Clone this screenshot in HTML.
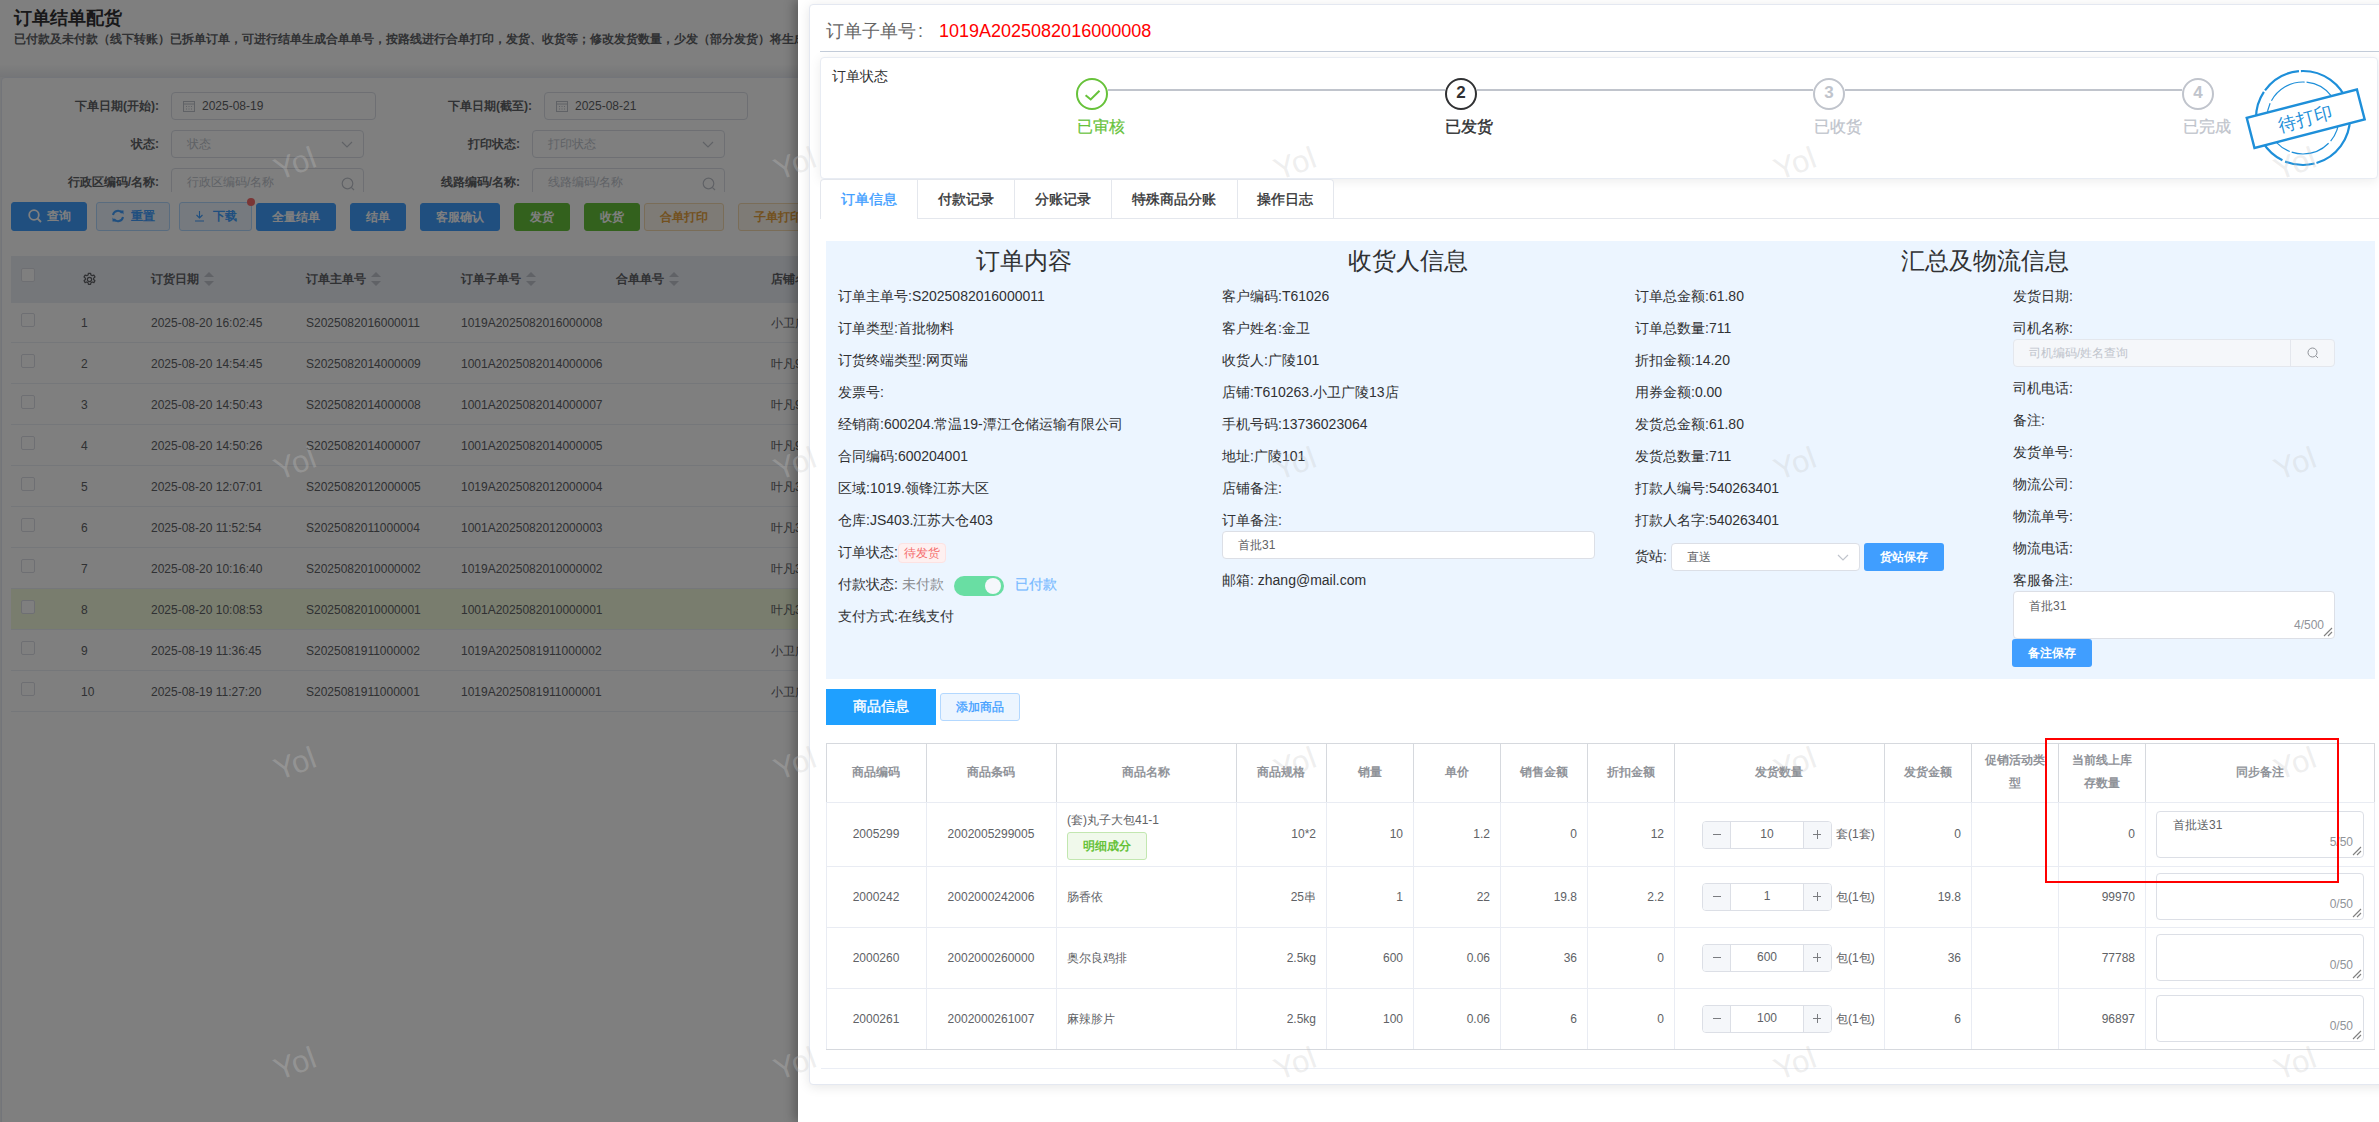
<!DOCTYPE html>
<html><head><meta charset="utf-8">
<style>
*{box-sizing:border-box;margin:0;padding:0}
html,body{width:2379px;height:1122px;overflow:hidden}
body{position:relative;font-family:"Liberation Sans",sans-serif;color:#333;background:#fff;font-size:14px}
.a{position:absolute;white-space:nowrap}
#left{position:absolute;left:0;top:0;width:798px;height:1122px;background:#f0f2f5;overflow:hidden}
#mask{position:absolute;left:0;top:0;width:798px;height:1122px;background:rgba(0,0,0,.5)}
#drawer{position:absolute;left:798px;top:0;width:1581px;height:1122px;background:#fff;box-shadow:-6px 0 12px rgba(0,0,0,.25)}
.lbl{font-size:12px;font-weight:bold;color:#606266;text-align:right}
.inp{position:absolute;height:28px;border:1px solid #dcdfe6;border-radius:4px;background:#fff;font-size:12px}
.btn{position:absolute;height:28px;border-radius:3px;font-size:12px;font-weight:bold;text-align:center;line-height:28px;color:#fff}
.bp{background:#409eff;border:1px solid #409eff}
.bl{background:#ecf5ff;border:1px solid #b3d8ff;color:#409eff}
.bg{background:#67c23a;border:1px solid #67c23a}
.bo{background:#fdf6ec;border:1px solid #f5dab1;color:#e6a23c}
.lt .th{position:absolute;top:0;height:47px;line-height:47px;font-size:12px;font-weight:bold;color:#606266}
.lrow{position:absolute;left:11px;width:900px;height:41px;border-bottom:1px solid #ebeef5;font-size:12px;color:#606266}
.lrow span{position:absolute;top:1px;line-height:41px}
.cb{position:absolute;width:14px;height:14px;border:1px solid #dcdfe6;border-radius:2px;background:#fff}
.caret{display:inline-block;position:relative;width:10px;height:14px;vertical-align:middle;margin-left:5px;top:-1px}
.caret:before{content:"";position:absolute;left:0;top:0;border:5px solid transparent;border-bottom-color:#c0c4cc;border-top:0}
.caret:after{content:"";position:absolute;left:0;bottom:0;border:5px solid transparent;border-top-color:#c0c4cc;border-bottom:0}
</style></head><body>
<div id="left">
  <div class="a" style="left:0;top:0;width:798px;height:65px;background:#fff"></div><div class="a" style="left:0;top:65px;width:798px;height:12px;background:linear-gradient(#fdfdfd,#eaecf0)"></div>
  <div class="a" style="left:14px;top:6px;font-size:18px;font-weight:bold;color:#303133;line-height:24px">订单结单配货</div>
  <div class="a" style="left:14px;top:31px;font-size:12px;font-weight:bold;color:#606266;line-height:16px">已付款及未付款（线下转账）已拆单订单，可进行结单生成合单单号，按路线进行合单打印，发货、收货等；修改发货数量，少发（部分发货）将生成新的子单</div>
  <div class="a" style="left:1px;top:77px;width:900px;height:1100px;background:#fff;border:1px solid #e6ebf5;border-radius:4px"></div>
<div class="a" style="left:0;top:80px;width:798px;height:112px;overflow:hidden">
<div class="a lbl" style="left:0;width:159px;top:12px;line-height:28px">下单日期(开始):</div>
<div class="inp" style="left:171px;top:12px;width:205px"><svg class="a" style="left:11px;top:7px" width="12" height="12" viewBox="0 0 12 12"><rect x="0.5" y="1.5" width="11" height="10" fill="none" stroke="#c0c4cc"/><line x1="0.5" y1="4" x2="11.5" y2="4" stroke="#c0c4cc"/><g fill="#c0c4cc"><rect x="3" y="6" width="1" height="1"/><rect x="5.5" y="6" width="1" height="1"/><rect x="8" y="6" width="1" height="1"/><rect x="3" y="8.5" width="1" height="1"/><rect x="5.5" y="8.5" width="1" height="1"/><rect x="8" y="8.5" width="1" height="1"/></g></svg><span class="a" style="left:30px;top:0;line-height:26px;color:#606266">2025-08-19</span></div>
<div class="a lbl" style="left:0;width:532px;top:12px;line-height:28px">下单日期(截至):</div>
<div class="inp" style="left:544px;top:12px;width:204px"><svg class="a" style="left:11px;top:7px" width="12" height="12" viewBox="0 0 12 12"><rect x="0.5" y="1.5" width="11" height="10" fill="none" stroke="#c0c4cc"/><line x1="0.5" y1="4" x2="11.5" y2="4" stroke="#c0c4cc"/><g fill="#c0c4cc"><rect x="3" y="6" width="1" height="1"/><rect x="5.5" y="6" width="1" height="1"/><rect x="8" y="6" width="1" height="1"/><rect x="3" y="8.5" width="1" height="1"/><rect x="5.5" y="8.5" width="1" height="1"/><rect x="8" y="8.5" width="1" height="1"/></g></svg><span class="a" style="left:30px;top:0;line-height:26px;color:#606266">2025-08-21</span></div>
<div class="a lbl" style="left:0;width:159px;top:50px;line-height:28px">状态:</div>
<div class="inp" style="left:171px;top:50px;width:193px"><span class="a" style="left:15px;top:0;line-height:26px;color:#c0c4cc">状态</span><svg class="a" style="right:10px;top:10px" width="12" height="7" viewBox="0 0 12 7"><path d="M1 1 L6 6 L11 1" fill="none" stroke="#c0c4cc" stroke-width="1.2"/></svg></div>
<div class="a lbl" style="left:0;width:520px;top:50px;line-height:28px">打印状态:</div>
<div class="inp" style="left:532px;top:50px;width:193px"><span class="a" style="left:15px;top:0;line-height:26px;color:#c0c4cc">打印状态</span><svg class="a" style="right:10px;top:10px" width="12" height="7" viewBox="0 0 12 7"><path d="M1 1 L6 6 L11 1" fill="none" stroke="#c0c4cc" stroke-width="1.2"/></svg></div>
<div class="a lbl" style="left:0;width:159px;top:88px;line-height:28px">行政区编码/名称:</div>
<div class="inp" style="left:171px;top:88px;width:193px"><span class="a" style="left:15px;top:0;line-height:26px;color:#c0c4cc">行政区编码/名称</span><svg class="a" style="right:8px;top:8px" width="14" height="14" viewBox="0 0 14 14"><circle cx="6.5" cy="6.5" r="5.3" fill="none" stroke="#c0c4cc" stroke-width="1.2"/><line x1="10.3" y1="10.3" x2="13" y2="13" stroke="#c0c4cc" stroke-width="1.2"/></svg></div>
<div class="a lbl" style="left:0;width:520px;top:88px;line-height:28px">线路编码/名称:</div>
<div class="inp" style="left:532px;top:88px;width:193px"><span class="a" style="left:15px;top:0;line-height:26px;color:#c0c4cc">线路编码/名称</span><svg class="a" style="right:8px;top:8px" width="14" height="14" viewBox="0 0 14 14"><circle cx="6.5" cy="6.5" r="5.3" fill="none" stroke="#c0c4cc" stroke-width="1.2"/><line x1="10.3" y1="10.3" x2="13" y2="13" stroke="#c0c4cc" stroke-width="1.2"/></svg></div>
</div>
<div class="btn bp" style="left:11px;top:202px;width:76px;height:29px;line-height:27px"><svg style="vertical-align:-3px;margin-right:5px" width="14" height="14" viewBox="0 0 14 14"><circle cx="6" cy="6" r="4.8" fill="none" stroke="#fff" stroke-width="1.8"/><line x1="9.5" y1="9.5" x2="13" y2="13" stroke="#fff" stroke-width="1.8"/></svg>查询</div>
<div class="btn bl" style="left:96px;top:202px;width:74px;height:29px;line-height:27px"><svg style="vertical-align:-3px;margin-right:6px" width="14" height="14" viewBox="0 0 14 14"><path d="M2 6 A5 5 0 0 1 11 4" fill="none" stroke="#409eff" stroke-width="2"/><path d="M12 8 A5 5 0 0 1 3 10" fill="none" stroke="#409eff" stroke-width="2"/><path d="M9 1.5 L12.5 1.5 L12.5 5.5 Z" fill="#409eff"/><path d="M5 12.5 L1.5 12.5 L1.5 8.5 Z" fill="#409eff"/></svg>重置</div>
<div class="btn bl" style="left:179px;top:202px;width:73px;height:29px;line-height:27px"><svg style="vertical-align:-2px;margin-right:8px" width="11" height="12" viewBox="0 0 11 12"><path d="M5.5 1 V8 M2.5 5 L5.5 8 L8.5 5 M1 11 H10" fill="none" stroke="#409eff" stroke-width="1.1"/></svg>下载</div>
<div class="btn bp" style="left:256px;top:203px;width:80px;height:28px;line-height:26px">全量结单</div>
<div class="btn bp" style="left:350px;top:203px;width:56px;height:28px;line-height:26px">结单</div>
<div class="btn bp" style="left:420px;top:203px;width:80px;height:28px;line-height:26px">客服确认</div>
<div class="btn bg" style="left:514px;top:203px;width:56px;height:28px;line-height:26px">发货</div>
<div class="btn bg" style="left:584px;top:203px;width:56px;height:28px;line-height:26px">收货</div>
<div class="btn bo" style="left:644px;top:203px;width:80px;height:28px;line-height:26px">合单打印</div>
<div class="btn bo" style="left:738px;top:203px;width:80px;height:28px;line-height:26px">子单打印</div>
<div class="a" style="left:247px;top:198px;width:8px;height:8px;border-radius:4px;background:#f56c6c"></div>
<div class="a lt" style="left:11px;top:256px;width:900px;height:47px;background:#ebeef5">
<div class="cb" style="left:10px;top:12px"></div>
<svg class="a" style="left:71px;top:16px" width="15" height="15" viewBox="0 0 24 24"><path d="M12 8.5a3.5 3.5 0 1 0 0 7 3.5 3.5 0 0 0 0-7z" fill="none" stroke="#606266" stroke-width="2"/><path d="M10.3 2h3.4l.6 2.8 2 1.1 2.7-.9 1.7 2.9-2.1 1.9v2.3l2.1 1.9-1.7 2.9-2.7-.9-2 1.1-.6 2.8h-3.4l-.6-2.8-2-1.1-2.7.9-1.7-2.9 2.1-1.9v-2.3L3.3 7.9 5 5l2.7.9 2-1.1z" fill="none" stroke="#606266" stroke-width="2" stroke-linejoin="round"/></svg>
<div class="th" style="left:140px">订货日期<i class="caret"></i></div>
<div class="th" style="left:295px">订单主单号<i class="caret"></i></div>
<div class="th" style="left:450px">订单子单号<i class="caret"></i></div>
<div class="th" style="left:605px">合单单号<i class="caret"></i></div>
<div class="th" style="left:760px">店铺名称</div>
</div>
<div class="lrow" style="top:302px;height:41px;">
<div class="cb" style="left:10px;top:11px"></div>
<span style="left:70px">1</span><span style="left:140px">2025-08-20 16:02:45</span><span style="left:295px">S2025082016000011</span><span style="left:450px">1019A2025082016000008</span><span style="left:760px">小卫广陵13店</span>
</div>
<div class="lrow" style="top:343px;height:41px;">
<div class="cb" style="left:10px;top:11px"></div>
<span style="left:70px">2</span><span style="left:140px">2025-08-20 14:54:45</span><span style="left:295px">S2025082014000009</span><span style="left:450px">1001A2025082014000006</span><span style="left:760px">叶凡9店</span>
</div>
<div class="lrow" style="top:384px;height:41px;">
<div class="cb" style="left:10px;top:11px"></div>
<span style="left:70px">3</span><span style="left:140px">2025-08-20 14:50:43</span><span style="left:295px">S2025082014000008</span><span style="left:450px">1001A2025082014000007</span><span style="left:760px">叶凡9店</span>
</div>
<div class="lrow" style="top:425px;height:41px;">
<div class="cb" style="left:10px;top:11px"></div>
<span style="left:70px">4</span><span style="left:140px">2025-08-20 14:50:26</span><span style="left:295px">S2025082014000007</span><span style="left:450px">1001A2025082014000005</span><span style="left:760px">叶凡9店</span>
</div>
<div class="lrow" style="top:466px;height:41px;">
<div class="cb" style="left:10px;top:11px"></div>
<span style="left:70px">5</span><span style="left:140px">2025-08-20 12:07:01</span><span style="left:295px">S2025082012000005</span><span style="left:450px">1019A2025082012000004</span><span style="left:760px">叶凡3店</span>
</div>
<div class="lrow" style="top:507px;height:41px;">
<div class="cb" style="left:10px;top:11px"></div>
<span style="left:70px">6</span><span style="left:140px">2025-08-20 11:52:54</span><span style="left:295px">S2025082011000004</span><span style="left:450px">1001A2025082012000003</span><span style="left:760px">叶凡3店</span>
</div>
<div class="lrow" style="top:548px;height:41px;">
<div class="cb" style="left:10px;top:11px"></div>
<span style="left:70px">7</span><span style="left:140px">2025-08-20 10:16:40</span><span style="left:295px">S2025082010000002</span><span style="left:450px">1019A2025082010000002</span><span style="left:760px">叶凡3店</span>
</div>
<div class="lrow" style="top:589px;height:41px;background:#f2fadc;">
<div class="cb" style="left:10px;top:11px"></div>
<span style="left:70px">8</span><span style="left:140px">2025-08-20 10:08:53</span><span style="left:295px">S2025082010000001</span><span style="left:450px">1001A2025082010000001</span><span style="left:760px">叶凡3店</span>
</div>
<div class="lrow" style="top:630px;height:41px;">
<div class="cb" style="left:10px;top:11px"></div>
<span style="left:70px">9</span><span style="left:140px">2025-08-19 11:36:45</span><span style="left:295px">S2025081911000002</span><span style="left:450px">1019A2025081911000002</span><span style="left:760px">小卫广陵13店</span>
</div>
<div class="lrow" style="top:671px;height:41px;">
<div class="cb" style="left:10px;top:11px"></div>
<span style="left:70px">10</span><span style="left:140px">2025-08-19 11:27:20</span><span style="left:295px">S2025081911000001</span><span style="left:450px">1019A2025081911000001</span><span style="left:760px">小卫广陵13店</span>
</div>
</div>

<div id="mask"></div>
<div class="a " style="left:798px;top:0;width:1581px;height:1122px;background:#fff;box-shadow:-4px 0 10px rgba(0,0,0,.28)"></div>
<div class="a " style="left:809px;top:4px;width:1600px;height:1081px;border:1px solid #e4e8f1;border-radius:4px;background:#fff;box-shadow:0 2px 12px rgba(0,0,0,.1)"></div>
<div class="a " style="left:826px;top:19px;font-size:18px;line-height:24px;color:#666">订单子单号<span style="margin-left:2px">:</span></div>
<div class="a " style="left:939px;top:19px;font-size:18px;line-height:24px;color:#f00">1019A2025082016000008</div>
<div class="a " style="left:820px;top:50.5px;width:1560px;height:1.5px;background:#c3ccd9"></div>
<div class="a " style="left:820px;top:57px;width:1558px;height:122px;border:1px solid #e8ecf3;border-radius:4px;background:#fff;box-shadow:0 2px 12px rgba(0,0,0,.08)"></div>
<div class="a " style="left:832px;top:66px;font-size:14px;line-height:20px;color:#303133">订单状态</div>
<div class="a " style="left:1108px;top:89px;width:337px;height:2px;background:#c0c4cc"></div>
<div class="a " style="left:1477px;top:89px;width:336px;height:2px;background:#c0c4cc"></div>
<div class="a " style="left:1845px;top:89px;width:337px;height:2px;background:#c0c4cc"></div>
<div class="a " style="left:1076px;top:78px;width:32px;height:32px;border:2px solid #67c23a;border-radius:50%;background:#fff"></div>
<svg class="a" style="left:1076px;top:78px" width="32" height="32" viewBox="0 0 32 32"><path d="M9.6 17.3 L14.7 21.5 L23.5 12.7" fill="none" stroke="#67c23a" stroke-width="2"/></svg>
<div class="a " style="left:1445px;top:78px;width:32px;height:32px;border:2px solid #303133;border-radius:50%;background:#fff;text-align:center;line-height:25px;font-size:17px;font-weight:bold;color:#303133">2</div>
<div class="a " style="left:1813px;top:78px;width:32px;height:32px;border:2px solid #c0c4cc;border-radius:50%;background:#fff;text-align:center;line-height:25px;font-size:17px;font-weight:bold;color:#c0c4cc">3</div>
<div class="a " style="left:2182px;top:78px;width:32px;height:32px;border:2px solid #c0c4cc;border-radius:50%;background:#fff;text-align:center;line-height:25px;font-size:17px;font-weight:bold;color:#c0c4cc">4</div>
<div class="a " style="left:1077px;top:116px;font-size:16px;line-height:22px;color:#67c23a;-webkit-text-stroke:.2px #67c23a">已审核</div>
<div class="a " style="left:1445px;top:116px;font-size:16px;line-height:22px;color:#303133;-webkit-text-stroke:.4px #303133">已发货</div>
<div class="a " style="left:1814px;top:116px;font-size:16px;line-height:22px;color:#c0c4cc;-webkit-text-stroke:.25px #c0c4cc">已收货</div>
<div class="a " style="left:2183px;top:116px;font-size:16px;line-height:22px;color:#c0c4cc;-webkit-text-stroke:.25px #c0c4cc">已完成</div>
<svg class="a" style="left:2240px;top:60px" width="139" height="115" viewBox="2240 60 139 115">
<circle cx="2303" cy="118" r="47" fill="none" stroke="#1e8fd9" stroke-width="2.2" stroke-dasharray="60 2 30 3 80 2 40 2"/>
<circle cx="2303" cy="118" r="36" fill="none" stroke="#1e8fd9" stroke-width="1.2" stroke-dasharray="25 3 40 2 30 3"/>
<g transform="rotate(-14.5 2305.7 118.7)">
<rect x="2248.8" y="103.2" width="113.8" height="31" fill="#fff" stroke="#1e8fd9" stroke-width="2.4"/>
<text x="2305.7" y="125" text-anchor="middle" font-size="18" fill="#1e8fd9" font-family="Liberation Sans, sans-serif" letter-spacing="1">待打印</text>
</g></svg>
<div class="a " style="left:820px;top:179px;width:514px;height:40px;border:1px solid #e4e7ed;border-bottom:none;border-radius:4px 4px 0 0;background:#fff"></div>
<div class="a " style="left:820px;top:179px;width:97px;height:40px;line-height:40px;text-align:center;font-size:14px;-webkit-text-stroke:.35px #409eff;color:#409eff">订单信息</div>
<div class="a " style="left:917px;top:179px;width:1px;height:40px;background:#e4e7ed"></div>
<div class="a " style="left:917px;top:179px;width:97px;height:40px;line-height:40px;text-align:center;font-size:14px;-webkit-text-stroke:.35px #303133;color:#303133">付款记录</div>
<div class="a " style="left:1014px;top:179px;width:1px;height:40px;background:#e4e7ed"></div>
<div class="a " style="left:1014px;top:179px;width:97px;height:40px;line-height:40px;text-align:center;font-size:14px;-webkit-text-stroke:.35px #303133;color:#303133">分账记录</div>
<div class="a " style="left:1111px;top:179px;width:1px;height:40px;background:#e4e7ed"></div>
<div class="a " style="left:1111px;top:179px;width:126px;height:40px;line-height:40px;text-align:center;font-size:14px;-webkit-text-stroke:.35px #303133;color:#303133">特殊商品分账</div>
<div class="a " style="left:1237px;top:179px;width:1px;height:40px;background:#e4e7ed"></div>
<div class="a " style="left:1237px;top:179px;width:96px;height:40px;line-height:40px;text-align:center;font-size:14px;-webkit-text-stroke:.35px #303133;color:#303133">操作日志</div>
<div class="a " style="left:820px;top:218px;width:1560px;height:1px;background:#e4e7ed"></div>
<div class="a " style="left:821px;top:218px;width:96px;height:1px;background:#fff"></div>
<div class="a " style="left:826px;top:241px;width:1549px;height:438px;background:#ecf5ff"></div>
<div class="a " style="left:826px;top:245px;width:396px;text-align:center;font-size:24px;line-height:32px;color:#303133">订单内容</div>
<div class="a " style="left:1210px;top:245px;width:396px;text-align:center;font-size:24px;line-height:32px;color:#303133">收货人信息</div>
<div class="a " style="left:1606px;top:245px;width:757px;text-align:center;font-size:24px;line-height:32px;color:#303133">汇总及物流信息</div>
<div class="a " style="left:838px;top:280px;font-size:14px;line-height:32px;color:#303133;">订单主单号:S2025082016000011</div>
<div class="a " style="left:838px;top:312px;font-size:14px;line-height:32px;color:#303133;">订单类型:首批物料</div>
<div class="a " style="left:838px;top:344px;font-size:14px;line-height:32px;color:#303133;">订货终端类型:网页端</div>
<div class="a " style="left:838px;top:376px;font-size:14px;line-height:32px;color:#303133;">发票号:</div>
<div class="a " style="left:838px;top:408px;font-size:14px;line-height:32px;color:#303133;">经销商:600204.常温19-潭江仓储运输有限公司</div>
<div class="a " style="left:838px;top:440px;font-size:14px;line-height:32px;color:#303133;">合同编码:600204001</div>
<div class="a " style="left:838px;top:472px;font-size:14px;line-height:32px;color:#303133;">区域:1019.领锋江苏大区</div>
<div class="a " style="left:838px;top:504px;font-size:14px;line-height:32px;color:#303133;">仓库:JS403.江苏大仓403</div>
<div class="a " style="left:838px;top:536px;font-size:14px;line-height:32px;color:#303133;">订单状态:</div>
<div class="a " style="left:838px;top:568px;font-size:14px;line-height:32px;color:#303133;">付款状态:</div>
<div class="a " style="left:838px;top:600px;font-size:14px;line-height:32px;color:#303133;">支付方式:在线支付</div>
<div class="a " style="left:898px;top:543px;width:48px;height:20px;border:1px solid #fde2e2;background:#fef0f0;border-radius:4px;color:#f56c6c;font-size:12px;line-height:18px;text-align:center">待发货</div>
<div class="a " style="left:902px;top:568px;font-size:14px;line-height:32px;color:#8a8c90">未付款</div>
<div class="a " style="left:954px;top:576px;width:50px;height:20px;border-radius:10px;background:#13ce66;opacity:.6"></div>
<div class="a " style="left:985px;top:578px;width:16px;height:16px;border-radius:50%;background:#f5f7fb"></div>
<div class="a " style="left:1015px;top:568px;font-size:14px;line-height:32px;color:#409eff;opacity:.68;-webkit-text-stroke:.2px #409eff">已付款</div>
<div class="a " style="left:1222px;top:280px;font-size:14px;line-height:32px;color:#303133;">客户编码:T61026</div>
<div class="a " style="left:1222px;top:312px;font-size:14px;line-height:32px;color:#303133;">客户姓名:金卫</div>
<div class="a " style="left:1222px;top:344px;font-size:14px;line-height:32px;color:#303133;">收货人:广陵101</div>
<div class="a " style="left:1222px;top:376px;font-size:14px;line-height:32px;color:#303133;">店铺:T610263.小卫广陵13店</div>
<div class="a " style="left:1222px;top:408px;font-size:14px;line-height:32px;color:#303133;">手机号码:13736023064</div>
<div class="a " style="left:1222px;top:440px;font-size:14px;line-height:32px;color:#303133;">地址:广陵101</div>
<div class="a " style="left:1222px;top:472px;font-size:14px;line-height:32px;color:#303133;">店铺备注:</div>
<div class="a " style="left:1222px;top:504px;font-size:14px;line-height:32px;color:#303133;">订单备注:</div>
<div class="a " style="left:1222px;top:531px;width:373px;height:28px;border:1px solid #dcdfe6;border-radius:4px;background:#fff;font-size:12px;line-height:26px;padding-left:15px;color:#606266">首批31</div>
<div class="a " style="left:1222px;top:564px;font-size:14px;line-height:32px;color:#303133">邮箱: zhang@mail.com</div>
<div class="a " style="left:1635px;top:280px;font-size:14px;line-height:32px;color:#303133;">订单总金额:61.80</div>
<div class="a " style="left:1635px;top:312px;font-size:14px;line-height:32px;color:#303133;">订单总数量:711</div>
<div class="a " style="left:1635px;top:344px;font-size:14px;line-height:32px;color:#303133;">折扣金额:14.20</div>
<div class="a " style="left:1635px;top:376px;font-size:14px;line-height:32px;color:#303133;">用券金额:0.00</div>
<div class="a " style="left:1635px;top:408px;font-size:14px;line-height:32px;color:#303133;">发货总金额:61.80</div>
<div class="a " style="left:1635px;top:440px;font-size:14px;line-height:32px;color:#303133;">发货总数量:711</div>
<div class="a " style="left:1635px;top:472px;font-size:14px;line-height:32px;color:#303133;">打款人编号:540263401</div>
<div class="a " style="left:1635px;top:504px;font-size:14px;line-height:32px;color:#303133;">打款人名字:540263401</div>
<div class="a " style="left:1635px;top:540px;font-size:14px;line-height:32px;color:#303133">货站:</div>
<div class="a " style="left:1671px;top:543px;width:189px;height:28px;border:1px solid #dcdfe6;border-radius:4px;background:#fff;font-size:12px;line-height:26px;padding-left:15px;color:#606266">直送<svg class="a" style="right:10px;top:10px" width="12" height="7" viewBox="0 0 12 7"><path d="M1 1 L6 6 L11 1" fill="none" stroke="#c0c4cc" stroke-width="1.2"/></svg></div>
<div class="a " style="left:1864px;top:543px;width:80px;height:28px;border-radius:3px;background:#409eff;color:#fff;font-size:12px;font-weight:bold;line-height:28px;text-align:center">货站保存</div>
<div class="a " style="left:2013px;top:280px;font-size:14px;line-height:32px;color:#303133;">发货日期:</div>
<div class="a " style="left:2013px;top:312px;font-size:14px;line-height:32px;color:#303133;">司机名称:</div>
<div class="a " style="left:2013px;top:339px;width:322px;height:28px;border:1px solid #e4e7ed;border-radius:4px;background:#f5f7fa;font-size:12px;line-height:26px;padding-left:15px;color:#c0c4cc">司机编码/姓名查询<div class="a" style="left:276px;top:0;width:1px;height:26px;background:#e4e7ed"></div><svg class="a" style="left:293px;top:7px" width="12" height="12" viewBox="0 0 12 12"><circle cx="5.5" cy="5.5" r="4.5" fill="none" stroke="#909399" stroke-width="1"/><line x1="8.8" y1="8.8" x2="11" y2="11" stroke="#909399" stroke-width="1"/></svg></div>
<div class="a " style="left:2013px;top:372px;font-size:14px;line-height:32px;color:#303133">司机电话:</div>
<div class="a " style="left:2013px;top:404px;font-size:14px;line-height:32px;color:#303133">备注:</div>
<div class="a " style="left:2013px;top:436px;font-size:14px;line-height:32px;color:#303133">发货单号:</div>
<div class="a " style="left:2013px;top:468px;font-size:14px;line-height:32px;color:#303133">物流公司:</div>
<div class="a " style="left:2013px;top:500px;font-size:14px;line-height:32px;color:#303133">物流单号:</div>
<div class="a " style="left:2013px;top:532px;font-size:14px;line-height:32px;color:#303133">物流电话:</div>
<div class="a " style="left:2013px;top:564px;font-size:14px;line-height:32px;color:#303133">客服备注:</div>
<div class="a " style="left:2013px;top:591px;width:322px;height:48px;border:1px solid #dcdfe6;border-radius:4px;background:#fff;font-size:12px;color:#606266"><span class="a" style="left:15px;top:6px;line-height:16px">首批31</span><span class="a" style="right:10px;top:25px;line-height:16px;color:#909399">4/500</span><svg class="a" style="right:1px;bottom:1px" width="11" height="11" viewBox="0 0 11 11"><path d="M10 2 L2 10 M10 6 L6 10" stroke="#808080" stroke-width="1.1"/></svg></div>
<div class="a " style="left:2012px;top:639px;width:80px;height:28px;border-radius:3px;background:#409eff;color:#fff;font-size:12px;font-weight:bold;line-height:28px;text-align:center">备注保存</div>
<div class="a " style="left:826px;top:689px;width:110px;height:36px;background:#1fa0ff;color:#fff;font-size:14px;-webkit-text-stroke:.4px #fff;line-height:34px;text-align:center">商品信息</div>
<div class="a " style="left:940px;top:693px;width:80px;height:28px;border:1px solid #b3d8ff;border-radius:3px;background:#ecf5ff;color:#409eff;font-size:12px;line-height:26px;text-align:center;-webkit-text-stroke:.3px #409eff">添加商品</div>
<div class="a " style="left:826px;top:743px;width:1549px;height:1px;background:#d6d9de"></div>
<div class="a " style="left:826px;top:743px;width:1px;height:59px;background:#d6d9de"></div>
<div class="a " style="left:826px;top:802px;width:1px;height:247px;background:#e9ecf3"></div>
<div class="a " style="left:926px;top:743px;width:1px;height:59px;background:#d6d9de"></div>
<div class="a " style="left:926px;top:802px;width:1px;height:247px;background:#e9ecf3"></div>
<div class="a " style="left:1056px;top:743px;width:1px;height:59px;background:#d6d9de"></div>
<div class="a " style="left:1056px;top:802px;width:1px;height:247px;background:#e9ecf3"></div>
<div class="a " style="left:1236px;top:743px;width:1px;height:59px;background:#d6d9de"></div>
<div class="a " style="left:1236px;top:802px;width:1px;height:247px;background:#e9ecf3"></div>
<div class="a " style="left:1326px;top:743px;width:1px;height:59px;background:#d6d9de"></div>
<div class="a " style="left:1326px;top:802px;width:1px;height:247px;background:#e9ecf3"></div>
<div class="a " style="left:1413px;top:743px;width:1px;height:59px;background:#d6d9de"></div>
<div class="a " style="left:1413px;top:802px;width:1px;height:247px;background:#e9ecf3"></div>
<div class="a " style="left:1500px;top:743px;width:1px;height:59px;background:#d6d9de"></div>
<div class="a " style="left:1500px;top:802px;width:1px;height:247px;background:#e9ecf3"></div>
<div class="a " style="left:1587px;top:743px;width:1px;height:59px;background:#d6d9de"></div>
<div class="a " style="left:1587px;top:802px;width:1px;height:247px;background:#e9ecf3"></div>
<div class="a " style="left:1674px;top:743px;width:1px;height:59px;background:#d6d9de"></div>
<div class="a " style="left:1674px;top:802px;width:1px;height:247px;background:#e9ecf3"></div>
<div class="a " style="left:1884px;top:743px;width:1px;height:59px;background:#d6d9de"></div>
<div class="a " style="left:1884px;top:802px;width:1px;height:247px;background:#e9ecf3"></div>
<div class="a " style="left:1971px;top:743px;width:1px;height:59px;background:#d6d9de"></div>
<div class="a " style="left:1971px;top:802px;width:1px;height:247px;background:#e9ecf3"></div>
<div class="a " style="left:2058px;top:743px;width:1px;height:59px;background:#d6d9de"></div>
<div class="a " style="left:2058px;top:802px;width:1px;height:247px;background:#e9ecf3"></div>
<div class="a " style="left:2145px;top:743px;width:1px;height:59px;background:#d6d9de"></div>
<div class="a " style="left:2145px;top:802px;width:1px;height:247px;background:#e9ecf3"></div>
<div class="a " style="left:2374px;top:743px;width:1px;height:59px;background:#d6d9de"></div>
<div class="a " style="left:2374px;top:802px;width:1px;height:247px;background:#e9ecf3"></div>
<div class="a " style="left:826px;top:802px;width:1549px;height:1px;background:#e9ecf3"></div>
<div class="a " style="left:826px;top:866px;width:1549px;height:1px;background:#e9ecf3"></div>
<div class="a " style="left:826px;top:927px;width:1549px;height:1px;background:#e9ecf3"></div>
<div class="a " style="left:826px;top:988px;width:1549px;height:1px;background:#e9ecf3"></div>
<div class="a " style="left:826px;top:1049px;width:1549px;height:1px;background:#d6d9de"></div>
<div class="a " style="left:826px;top:743px;width:100px;height:59px;text-align:center;font-size:12px;font-weight:bold;color:#909399;line-height:59px">商品编码</div>
<div class="a " style="left:926px;top:743px;width:130px;height:59px;text-align:center;font-size:12px;font-weight:bold;color:#909399;line-height:59px">商品条码</div>
<div class="a " style="left:1056px;top:743px;width:180px;height:59px;text-align:center;font-size:12px;font-weight:bold;color:#909399;line-height:59px">商品名称</div>
<div class="a " style="left:1236px;top:743px;width:90px;height:59px;text-align:center;font-size:12px;font-weight:bold;color:#909399;line-height:59px">商品规格</div>
<div class="a " style="left:1326px;top:743px;width:87px;height:59px;text-align:center;font-size:12px;font-weight:bold;color:#909399;line-height:59px">销量</div>
<div class="a " style="left:1413px;top:743px;width:87px;height:59px;text-align:center;font-size:12px;font-weight:bold;color:#909399;line-height:59px">单价</div>
<div class="a " style="left:1500px;top:743px;width:87px;height:59px;text-align:center;font-size:12px;font-weight:bold;color:#909399;line-height:59px">销售金额</div>
<div class="a " style="left:1587px;top:743px;width:87px;height:59px;text-align:center;font-size:12px;font-weight:bold;color:#909399;line-height:59px">折扣金额</div>
<div class="a " style="left:1674px;top:743px;width:210px;height:59px;text-align:center;font-size:12px;font-weight:bold;color:#909399;line-height:59px">发货数量</div>
<div class="a " style="left:1884px;top:743px;width:87px;height:59px;text-align:center;font-size:12px;font-weight:bold;color:#909399;line-height:59px">发货金额</div>
<div class="a " style="left:1971px;top:749px;width:87px;text-align:center;font-size:12px;font-weight:bold;color:#909399;line-height:23px">促销活动类<br>型</div>
<div class="a " style="left:2058px;top:749px;width:87px;text-align:center;font-size:12px;font-weight:bold;color:#909399;line-height:23px">当前线上库<br>存数量</div>
<div class="a " style="left:2145px;top:743px;width:229px;height:59px;text-align:center;font-size:12px;font-weight:bold;color:#909399;line-height:59px">同步备注</div>
<div class="a " style="left:826px;top:824px;width:100px;height:20px;line-height:20px;text-align:center;padding:0 0px;font-size:12px;color:#606266">2005299</div>
<div class="a " style="left:926px;top:824px;width:130px;height:20px;line-height:20px;text-align:center;padding:0 0px;font-size:12px;color:#606266">2002005299005</div>
<div class="a " style="left:1067px;top:810px;font-size:12px;line-height:20px;color:#606266">(套)丸子大包41-1</div>
<div class="a " style="left:1067px;top:832px;width:80px;height:28px;border:1px solid #c2e7b0;border-radius:3px;background:#f0f9eb;color:#67c23a;font-size:12px;font-weight:bold;line-height:26px;text-align:center">明细成分</div>
<div class="a " style="left:1236px;top:824px;width:90px;height:20px;line-height:20px;text-align:right;padding:0 10px;font-size:12px;color:#606266">10*2</div>
<div class="a " style="left:1326px;top:824px;width:87px;height:20px;line-height:20px;text-align:right;padding:0 10px;font-size:12px;color:#606266">10</div>
<div class="a " style="left:1413px;top:824px;width:87px;height:20px;line-height:20px;text-align:right;padding:0 10px;font-size:12px;color:#606266">1.2</div>
<div class="a " style="left:1500px;top:824px;width:87px;height:20px;line-height:20px;text-align:right;padding:0 10px;font-size:12px;color:#606266">0</div>
<div class="a " style="left:1587px;top:824px;width:87px;height:20px;line-height:20px;text-align:right;padding:0 10px;font-size:12px;color:#606266">12</div>
<div class="a " style="left:1884px;top:824px;width:87px;height:20px;line-height:20px;text-align:right;padding:0 10px;font-size:12px;color:#606266">0</div>
<div class="a " style="left:2058px;top:824px;width:87px;height:20px;line-height:20px;text-align:right;padding:0 10px;font-size:12px;color:#606266">0</div>
<div class="a " style="left:1702px;top:821px;width:130px;height:28px;border:1px solid #dcdfe6;border-radius:4px;background:#fff;font-size:12px;color:#606266;overflow:hidden"><div class="a" style="left:0;top:0;width:28px;height:26px;background:#f5f7fa;border-right:1px solid #dcdfe6"><div class="a" style="left:10px;top:12px;width:8px;height:1px;background:#7a7c80"></div></div><div class="a" style="right:0;top:0;width:28px;height:26px;background:#f5f7fa;border-left:1px solid #dcdfe6"><div class="a" style="left:9px;top:12px;width:8px;height:1px;background:#7a7c80"></div><div class="a" style="left:13px;top:8px;width:1px;height:9px;background:#7a7c80"></div></div><div class="a" style="left:28px;top:0;width:72px;height:26px;text-align:center;line-height:24px">10</div></div>
<div class="a " style="left:1836px;top:824px;font-size:12px;line-height:20px;color:#606266">套(1套)</div>
<div class="a " style="left:2156px;top:811px;width:208px;height:47px;border:1px solid #dcdfe6;border-radius:4px;background:#fff;font-size:12px;color:#606266"><span class="a" style="left:16px;top:5px;line-height:16px">首批送31</span><span class="a" style="right:10px;top:22px;line-height:16px;color:#909399">5/50</span><svg class="a" style="right:1px;bottom:1px" width="11" height="11" viewBox="0 0 11 11"><path d="M10 2 L2 10 M10 6 L6 10" stroke="#808080" stroke-width="1.1"/></svg></div>
<div class="a " style="left:826px;top:886.5px;width:100px;height:20px;line-height:20px;text-align:center;padding:0 0px;font-size:12px;color:#606266">2000242</div>
<div class="a " style="left:926px;top:886.5px;width:130px;height:20px;line-height:20px;text-align:center;padding:0 0px;font-size:12px;color:#606266">2002000242006</div>
<div class="a " style="left:1067px;top:886.5px;font-size:12px;line-height:20px;color:#606266">肠香依</div>
<div class="a " style="left:1236px;top:886.5px;width:90px;height:20px;line-height:20px;text-align:right;padding:0 10px;font-size:12px;color:#606266">25串</div>
<div class="a " style="left:1326px;top:886.5px;width:87px;height:20px;line-height:20px;text-align:right;padding:0 10px;font-size:12px;color:#606266">1</div>
<div class="a " style="left:1413px;top:886.5px;width:87px;height:20px;line-height:20px;text-align:right;padding:0 10px;font-size:12px;color:#606266">22</div>
<div class="a " style="left:1500px;top:886.5px;width:87px;height:20px;line-height:20px;text-align:right;padding:0 10px;font-size:12px;color:#606266">19.8</div>
<div class="a " style="left:1587px;top:886.5px;width:87px;height:20px;line-height:20px;text-align:right;padding:0 10px;font-size:12px;color:#606266">2.2</div>
<div class="a " style="left:1884px;top:886.5px;width:87px;height:20px;line-height:20px;text-align:right;padding:0 10px;font-size:12px;color:#606266">19.8</div>
<div class="a " style="left:2058px;top:886.5px;width:87px;height:20px;line-height:20px;text-align:right;padding:0 10px;font-size:12px;color:#606266">99970</div>
<div class="a " style="left:1702px;top:883px;width:130px;height:28px;border:1px solid #dcdfe6;border-radius:4px;background:#fff;font-size:12px;color:#606266;overflow:hidden"><div class="a" style="left:0;top:0;width:28px;height:26px;background:#f5f7fa;border-right:1px solid #dcdfe6"><div class="a" style="left:10px;top:12px;width:8px;height:1px;background:#7a7c80"></div></div><div class="a" style="right:0;top:0;width:28px;height:26px;background:#f5f7fa;border-left:1px solid #dcdfe6"><div class="a" style="left:9px;top:12px;width:8px;height:1px;background:#7a7c80"></div><div class="a" style="left:13px;top:8px;width:1px;height:9px;background:#7a7c80"></div></div><div class="a" style="left:28px;top:0;width:72px;height:26px;text-align:center;line-height:24px">1</div></div>
<div class="a " style="left:1836px;top:886.5px;font-size:12px;line-height:20px;color:#606266">包(1包)</div>
<div class="a " style="left:2156px;top:873px;width:208px;height:47px;border:1px solid #dcdfe6;border-radius:4px;background:#fff;font-size:12px;color:#606266"><span class="a" style="right:10px;top:22px;line-height:16px;color:#909399">0/50</span><svg class="a" style="right:1px;bottom:1px" width="11" height="11" viewBox="0 0 11 11"><path d="M10 2 L2 10 M10 6 L6 10" stroke="#808080" stroke-width="1.1"/></svg></div>
<div class="a " style="left:826px;top:947.5px;width:100px;height:20px;line-height:20px;text-align:center;padding:0 0px;font-size:12px;color:#606266">2000260</div>
<div class="a " style="left:926px;top:947.5px;width:130px;height:20px;line-height:20px;text-align:center;padding:0 0px;font-size:12px;color:#606266">2002000260000</div>
<div class="a " style="left:1067px;top:947.5px;font-size:12px;line-height:20px;color:#606266">奥尔良鸡排</div>
<div class="a " style="left:1236px;top:947.5px;width:90px;height:20px;line-height:20px;text-align:right;padding:0 10px;font-size:12px;color:#606266">2.5kg</div>
<div class="a " style="left:1326px;top:947.5px;width:87px;height:20px;line-height:20px;text-align:right;padding:0 10px;font-size:12px;color:#606266">600</div>
<div class="a " style="left:1413px;top:947.5px;width:87px;height:20px;line-height:20px;text-align:right;padding:0 10px;font-size:12px;color:#606266">0.06</div>
<div class="a " style="left:1500px;top:947.5px;width:87px;height:20px;line-height:20px;text-align:right;padding:0 10px;font-size:12px;color:#606266">36</div>
<div class="a " style="left:1587px;top:947.5px;width:87px;height:20px;line-height:20px;text-align:right;padding:0 10px;font-size:12px;color:#606266">0</div>
<div class="a " style="left:1884px;top:947.5px;width:87px;height:20px;line-height:20px;text-align:right;padding:0 10px;font-size:12px;color:#606266">36</div>
<div class="a " style="left:2058px;top:947.5px;width:87px;height:20px;line-height:20px;text-align:right;padding:0 10px;font-size:12px;color:#606266">77788</div>
<div class="a " style="left:1702px;top:944px;width:130px;height:28px;border:1px solid #dcdfe6;border-radius:4px;background:#fff;font-size:12px;color:#606266;overflow:hidden"><div class="a" style="left:0;top:0;width:28px;height:26px;background:#f5f7fa;border-right:1px solid #dcdfe6"><div class="a" style="left:10px;top:12px;width:8px;height:1px;background:#7a7c80"></div></div><div class="a" style="right:0;top:0;width:28px;height:26px;background:#f5f7fa;border-left:1px solid #dcdfe6"><div class="a" style="left:9px;top:12px;width:8px;height:1px;background:#7a7c80"></div><div class="a" style="left:13px;top:8px;width:1px;height:9px;background:#7a7c80"></div></div><div class="a" style="left:28px;top:0;width:72px;height:26px;text-align:center;line-height:24px">600</div></div>
<div class="a " style="left:1836px;top:947.5px;font-size:12px;line-height:20px;color:#606266">包(1包)</div>
<div class="a " style="left:2156px;top:934px;width:208px;height:47px;border:1px solid #dcdfe6;border-radius:4px;background:#fff;font-size:12px;color:#606266"><span class="a" style="right:10px;top:22px;line-height:16px;color:#909399">0/50</span><svg class="a" style="right:1px;bottom:1px" width="11" height="11" viewBox="0 0 11 11"><path d="M10 2 L2 10 M10 6 L6 10" stroke="#808080" stroke-width="1.1"/></svg></div>
<div class="a " style="left:826px;top:1008.5px;width:100px;height:20px;line-height:20px;text-align:center;padding:0 0px;font-size:12px;color:#606266">2000261</div>
<div class="a " style="left:926px;top:1008.5px;width:130px;height:20px;line-height:20px;text-align:center;padding:0 0px;font-size:12px;color:#606266">2002000261007</div>
<div class="a " style="left:1067px;top:1008.5px;font-size:12px;line-height:20px;color:#606266">麻辣胗片</div>
<div class="a " style="left:1236px;top:1008.5px;width:90px;height:20px;line-height:20px;text-align:right;padding:0 10px;font-size:12px;color:#606266">2.5kg</div>
<div class="a " style="left:1326px;top:1008.5px;width:87px;height:20px;line-height:20px;text-align:right;padding:0 10px;font-size:12px;color:#606266">100</div>
<div class="a " style="left:1413px;top:1008.5px;width:87px;height:20px;line-height:20px;text-align:right;padding:0 10px;font-size:12px;color:#606266">0.06</div>
<div class="a " style="left:1500px;top:1008.5px;width:87px;height:20px;line-height:20px;text-align:right;padding:0 10px;font-size:12px;color:#606266">6</div>
<div class="a " style="left:1587px;top:1008.5px;width:87px;height:20px;line-height:20px;text-align:right;padding:0 10px;font-size:12px;color:#606266">0</div>
<div class="a " style="left:1884px;top:1008.5px;width:87px;height:20px;line-height:20px;text-align:right;padding:0 10px;font-size:12px;color:#606266">6</div>
<div class="a " style="left:2058px;top:1008.5px;width:87px;height:20px;line-height:20px;text-align:right;padding:0 10px;font-size:12px;color:#606266">96897</div>
<div class="a " style="left:1702px;top:1005px;width:130px;height:28px;border:1px solid #dcdfe6;border-radius:4px;background:#fff;font-size:12px;color:#606266;overflow:hidden"><div class="a" style="left:0;top:0;width:28px;height:26px;background:#f5f7fa;border-right:1px solid #dcdfe6"><div class="a" style="left:10px;top:12px;width:8px;height:1px;background:#7a7c80"></div></div><div class="a" style="right:0;top:0;width:28px;height:26px;background:#f5f7fa;border-left:1px solid #dcdfe6"><div class="a" style="left:9px;top:12px;width:8px;height:1px;background:#7a7c80"></div><div class="a" style="left:13px;top:8px;width:1px;height:9px;background:#7a7c80"></div></div><div class="a" style="left:28px;top:0;width:72px;height:26px;text-align:center;line-height:24px">100</div></div>
<div class="a " style="left:1836px;top:1008.5px;font-size:12px;line-height:20px;color:#606266">包(1包)</div>
<div class="a " style="left:2156px;top:995px;width:208px;height:47px;border:1px solid #dcdfe6;border-radius:4px;background:#fff;font-size:12px;color:#606266"><span class="a" style="right:10px;top:22px;line-height:16px;color:#909399">0/50</span><svg class="a" style="right:1px;bottom:1px" width="11" height="11" viewBox="0 0 11 11"><path d="M10 2 L2 10 M10 6 L6 10" stroke="#808080" stroke-width="1.1"/></svg></div>
<div class="a " style="left:2045px;top:738px;width:294px;height:145px;border:2px solid #ff0000"></div>
<div class="a " style="left:821px;top:1068px;width:1560px;height:1px;background:#ebeef5"></div>
<div class="a" style="left:254.6px;top:144.0px;width:80px;height:40px;line-height:40px;text-align:center;font-size:31px;color:rgba(199,199,199,.3);transform:rotate(-20deg);pointer-events:none">Yol</div>
<div class="a" style="left:754.6px;top:144.0px;width:80px;height:40px;line-height:40px;text-align:center;font-size:31px;color:rgba(199,199,199,.3);transform:rotate(-20deg);pointer-events:none">Yol</div>
<div class="a" style="left:1254.6px;top:144.0px;width:80px;height:40px;line-height:40px;text-align:center;font-size:31px;color:rgba(199,199,199,.3);transform:rotate(-20deg);pointer-events:none">Yol</div>
<div class="a" style="left:1754.6px;top:144.0px;width:80px;height:40px;line-height:40px;text-align:center;font-size:31px;color:rgba(199,199,199,.3);transform:rotate(-20deg);pointer-events:none">Yol</div>
<div class="a" style="left:2254.6px;top:144.0px;width:80px;height:40px;line-height:40px;text-align:center;font-size:31px;color:rgba(199,199,199,.3);transform:rotate(-20deg);pointer-events:none">Yol</div>
<div class="a" style="left:254.6px;top:444.0px;width:80px;height:40px;line-height:40px;text-align:center;font-size:31px;color:rgba(199,199,199,.3);transform:rotate(-20deg);pointer-events:none">Yol</div>
<div class="a" style="left:754.6px;top:444.0px;width:80px;height:40px;line-height:40px;text-align:center;font-size:31px;color:rgba(199,199,199,.3);transform:rotate(-20deg);pointer-events:none">Yol</div>
<div class="a" style="left:1254.6px;top:444.0px;width:80px;height:40px;line-height:40px;text-align:center;font-size:31px;color:rgba(199,199,199,.3);transform:rotate(-20deg);pointer-events:none">Yol</div>
<div class="a" style="left:1754.6px;top:444.0px;width:80px;height:40px;line-height:40px;text-align:center;font-size:31px;color:rgba(199,199,199,.3);transform:rotate(-20deg);pointer-events:none">Yol</div>
<div class="a" style="left:2254.6px;top:444.0px;width:80px;height:40px;line-height:40px;text-align:center;font-size:31px;color:rgba(199,199,199,.3);transform:rotate(-20deg);pointer-events:none">Yol</div>
<div class="a" style="left:254.6px;top:744.0px;width:80px;height:40px;line-height:40px;text-align:center;font-size:31px;color:rgba(199,199,199,.3);transform:rotate(-20deg);pointer-events:none">Yol</div>
<div class="a" style="left:754.6px;top:744.0px;width:80px;height:40px;line-height:40px;text-align:center;font-size:31px;color:rgba(199,199,199,.3);transform:rotate(-20deg);pointer-events:none">Yol</div>
<div class="a" style="left:1254.6px;top:744.0px;width:80px;height:40px;line-height:40px;text-align:center;font-size:31px;color:rgba(199,199,199,.3);transform:rotate(-20deg);pointer-events:none">Yol</div>
<div class="a" style="left:1754.6px;top:744.0px;width:80px;height:40px;line-height:40px;text-align:center;font-size:31px;color:rgba(199,199,199,.3);transform:rotate(-20deg);pointer-events:none">Yol</div>
<div class="a" style="left:2254.6px;top:744.0px;width:80px;height:40px;line-height:40px;text-align:center;font-size:31px;color:rgba(199,199,199,.3);transform:rotate(-20deg);pointer-events:none">Yol</div>
<div class="a" style="left:254.6px;top:1044.0px;width:80px;height:40px;line-height:40px;text-align:center;font-size:31px;color:rgba(199,199,199,.3);transform:rotate(-20deg);pointer-events:none">Yol</div>
<div class="a" style="left:754.6px;top:1044.0px;width:80px;height:40px;line-height:40px;text-align:center;font-size:31px;color:rgba(199,199,199,.3);transform:rotate(-20deg);pointer-events:none">Yol</div>
<div class="a" style="left:1254.6px;top:1044.0px;width:80px;height:40px;line-height:40px;text-align:center;font-size:31px;color:rgba(199,199,199,.3);transform:rotate(-20deg);pointer-events:none">Yol</div>
<div class="a" style="left:1754.6px;top:1044.0px;width:80px;height:40px;line-height:40px;text-align:center;font-size:31px;color:rgba(199,199,199,.3);transform:rotate(-20deg);pointer-events:none">Yol</div>
<div class="a" style="left:2254.6px;top:1044.0px;width:80px;height:40px;line-height:40px;text-align:center;font-size:31px;color:rgba(199,199,199,.3);transform:rotate(-20deg);pointer-events:none">Yol</div>
</body></html>
